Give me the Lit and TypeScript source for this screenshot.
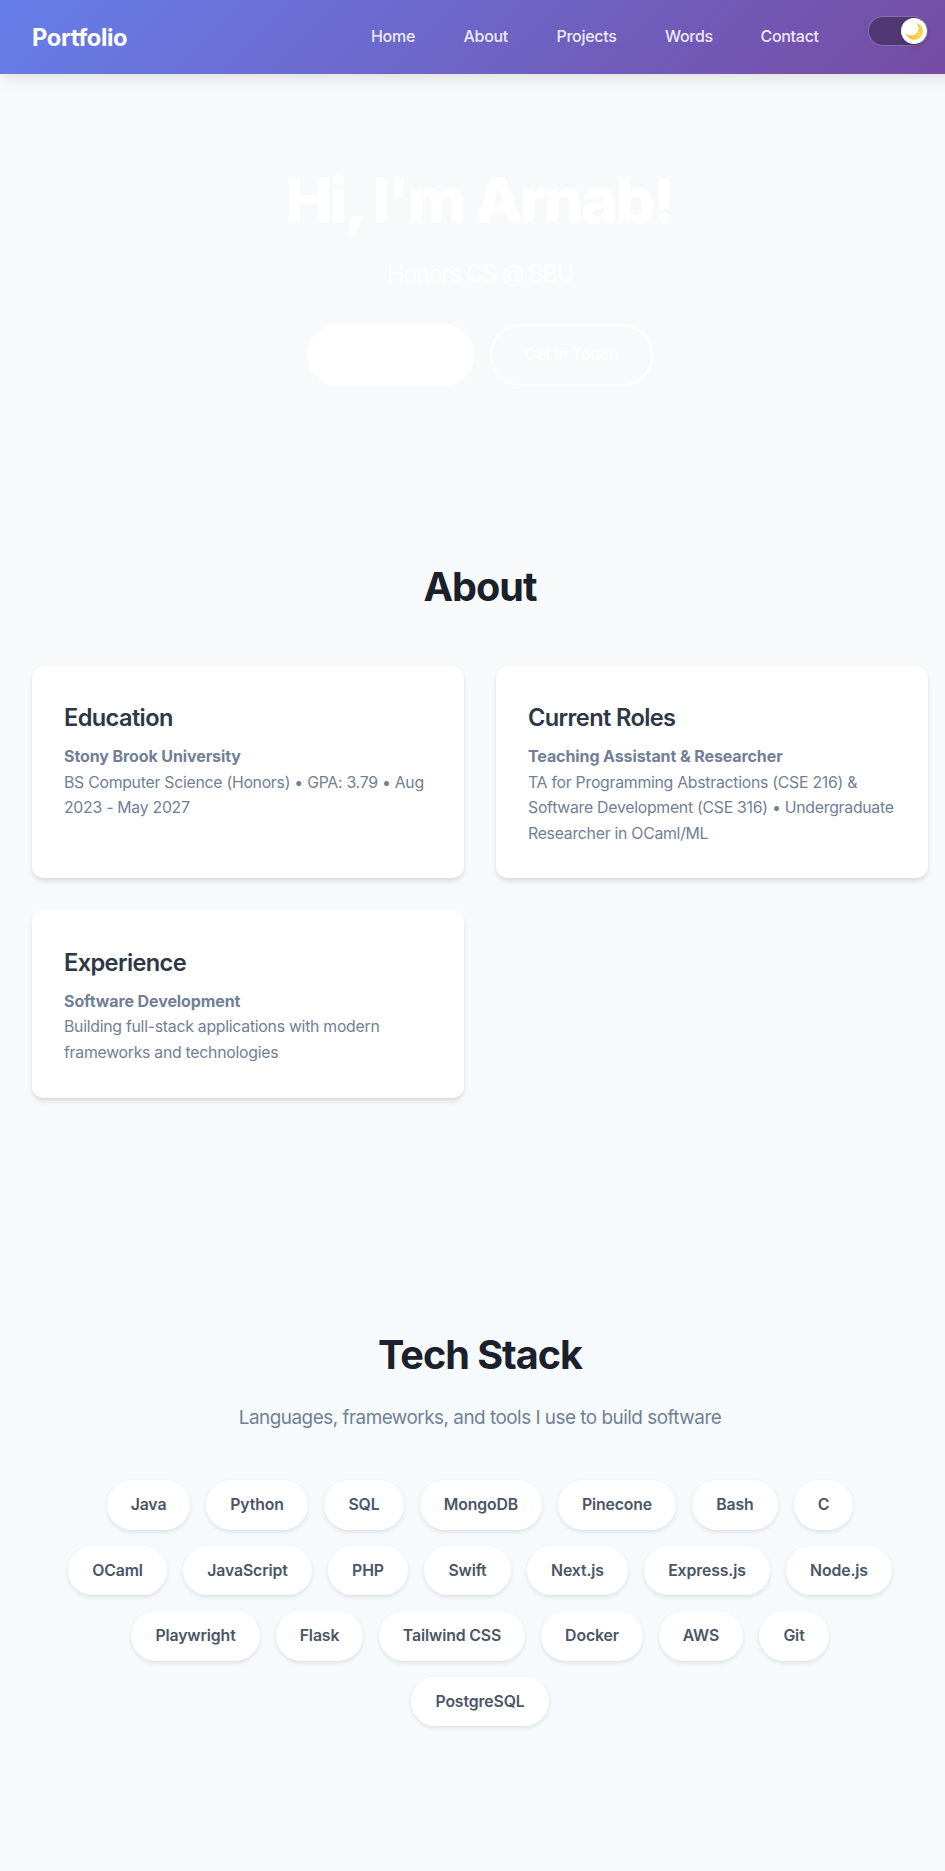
import { LitElement, html, css } from "lit";
import { customElement } from "lit/decorators.js";

const NAV = ["Home", "About", "Projects", "Words", "Contact"];
const NAV_WIDTHS = [44.5, 45, 60.5, 47.5, 59.5];

const CARDS = [
  { title: "Education", lead: "Stony Brook University", body: "BS Computer Science (Honors) • GPA: 3.79 • Aug 2023 - May 2027" },
  {
    title: "Current Roles",
    lead: "Teaching Assistant & Researcher",
    body: "TA for Programming Abstractions (CSE 216) & Software Development (CSE 316) • Undergraduate Researcher in OCaml/ML",
  },
  { title: "Experience", lead: "Software Development", body: "Building full-stack applications with modern frameworks and technologies" },
];

// Each entry is a label and its pill width in pixels.
const TECH: [string, number][] = [
  ["Java", 83], ["Python", 102], ["SQL", 80], ["MongoDB", 122], ["Pinecone", 118], ["Bash", 86], ["C", 59],
  ["OCaml", 99], ["JavaScript", 129], ["PHP", 80], ["Swift", 87], ["Next.js", 101], ["Express.js", 126], ["Node.js", 106],
  ["Playwright", 129], ["Flask", 87], ["Tailwind CSS", 146], ["Docker", 102], ["AWS", 84], ["Git", 70],
  ["PostgreSQL", 138],
];

@customElement("app-root")
export class AppRoot extends LitElement {
  static styles = css`
    :host {
      display: block;
      height: 1871px;
      overflow: hidden;
      background: #f8f9fb;
      font-family: Inter, "Liberation Sans", sans-serif;
      font-size: 16px;
      line-height: 1.6;
    }
    * { box-sizing: border-box; }
    h1, h2, h3, p { margin: 0; }
    .page { width: 960px; }
    header {
      position: relative;
      display: flex;
      align-items: center;
      height: 74px;
      padding: 0 32px;
      background: linear-gradient(135deg, #667eea 0%, #764ba2 100%);
      box-shadow: 0 10px 15px -3px rgba(0, 0, 0, 0.07), 0 4px 6px -2px rgba(0, 0, 0, 0.03);
    }
    .logo { flex: 1; padding-top: 1px; color: #fff; font-size: 23.7px; font-weight: 700; letter-spacing: -0.36px; }
    nav { display: flex; gap: 48px; margin-right: 48px; padding-bottom: 1px; }
    nav a { color: rgba(255, 255, 255, 0.9); font-size: 16px; font-weight: 500; letter-spacing: -0.3px; white-space: nowrap; }
    .toggle {
      display: flex;
      justify-content: flex-end;
      align-items: center;
      align-self: flex-start;
      margin-top: 16px;
      width: 60px;
      height: 30px;
      padding: 0 0.5px;
      border: 1px solid rgba(255, 255, 255, 0.3);
      border-radius: 15px;
      background: #503775;
    }
    .knob {
      display: flex;
      align-items: center;
      justify-content: center;
      width: 26px;
      height: 26px;
      border-radius: 50%;
      background: #fff;
      box-shadow: 0 2px 4px rgba(0, 0, 0, 0.2);
    }
    .knob svg { width: 18px; height: 18px; display: block; }

    .hero { display: flex; flex-direction: column; align-items: center; height: 399.6px; padding-top: 88px; color: #fff; text-align: center; }
    .hero h1 { font-size: 63px; line-height: 76.8px; font-weight: 800; letter-spacing: -2.75px; margin-bottom: 16px; margin-left: -2px; }
    .hero p { font-size: 23.7px; line-height: 38.4px; font-weight: 400; letter-spacing: -1.25px; opacity: 0.9; margin-bottom: 31px; }
    .actions { display: flex; gap: 16px; }
    .btn {
      display: flex;
      align-items: center;
      justify-content: center;
      width: 163px;
      height: 61.6px;
      border: 2px solid #fff;
      border-radius: 50px;
      font-size: 15.8px;
      font-weight: 600;
      letter-spacing: -0.15px;
      padding-bottom: 1px;
    }
    .btn.solid { width: 167px; background: #fff; }

    h2 { color: #1a202c; font-size: 39.6px; line-height: 64px; font-weight: 700; letter-spacing: -1px; text-align: center; padding-top: 1.4px; height: 64px; }
    .about { padding: 80px 32px; }
    .about h2 { margin-bottom: 48px; }
    .cards { display: grid; grid-template-columns: 1fr 1fr; gap: 32px; }
    .card {
      padding: 32px;
      border-radius: 12px;
      background: #fff;
      box-shadow: 0 4px 6px -1px rgba(0, 0, 0, 0.1), 0 2px 4px -1px rgba(0, 0, 0, 0.06);
    }
    .card h3 { color: #2d3748; font-size: 23.6px; line-height: 38.4px; font-weight: 600; letter-spacing: -0.62px; height: 38.4px; padding-top: 1.4px; margin-bottom: 8px; }
    .card p { color: #718096; font-size: 15.8px; line-height: 25.6px; letter-spacing: -0.26px; }
    .card strong { display: block; font-size: 16px; font-weight: 700; letter-spacing: -0.1px; }

    .tech { padding: 144px 64px 160px; background: #f7fafd; text-align: center; }
    .tech h2 { margin-bottom: 16px; }
    .sub { color: #718096; font-size: 18.9px; line-height: 30.7px; letter-spacing: -0.5px; height: 30.7px; padding-top: 1.4px; margin-bottom: 47.9px; }
    .pills { display: flex; flex-wrap: wrap; justify-content: center; gap: 16px; }
    .pill {
      height: 49.6px;
      padding: 12px 0;
      border-radius: 25px;
      background: #fff;
      color: #4a5568;
      font-size: 15.8px;
      line-height: 25.6px;
      font-weight: 600;
      letter-spacing: -0.12px;
      white-space: nowrap;
      box-shadow: 0 2px 4px rgba(0, 0, 0, 0.1);
    }
  `;

  render() {
    return html`
      <div class="page">
        <header>
          <div class="logo">Portfolio</div>
          <nav>${NAV.map((n, i) => html`<a style="width:${NAV_WIDTHS[i]}px">${n}</a>`)}</nav>
          <div class="toggle">
            <div class="knob">
              <svg viewBox="0 0 18 18">
                <defs>
                  <linearGradient id="moon" x1="0" y1="1" x2="1" y2="0">
                    <stop offset="0" stop-color="#f2b632" />
                    <stop offset="0.55" stop-color="#fbd955" />
                    <stop offset="1" stop-color="#f3c03c" />
                  </linearGradient>
                </defs>
                <path d="M11.4 0.9 A8.6 8.6 0 1 1 0.9 11.3 A7.2 7.2 0 0 0 11.4 0.9 Z" fill="url(#moon)" />
              </svg>
            </div>
          </div>
        </header>
        <section class="hero">
          <h1>Hi, I'm Arnab!</h1>
          <p>Honors CS @ SBU</p>
          <div class="actions">
            <div class="btn solid"></div>
            <div class="btn">Get in Touch</div>
          </div>
        </section>
        <section class="about">
          <h2>About</h2>
          <div class="cards">
            ${CARDS.map((c) => html`<article class="card"><h3>${c.title}</h3><p><strong>${c.lead}</strong>${c.body}</p></article>`)}
          </div>
        </section>
        <section class="tech">
          <h2>Tech Stack</h2>
          <p class="sub">Languages, frameworks, and tools I use to build software</p>
          <div class="pills">${TECH.map(([t, w]) => html`<span class="pill" style="width:${w}px">${t}</span>`)}</div>
        </section>
      </div>
    `;
  }
}
